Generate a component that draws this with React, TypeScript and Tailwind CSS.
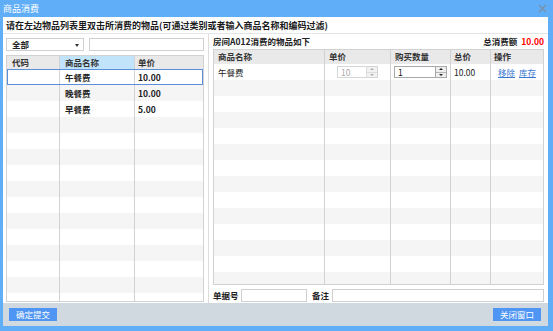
const font = { fontFamily: '"Noto Sans CJK SC", "Noto Sans", sans-serif' };

const leftRows = [
  { code: "", name: "午餐费", price: "10.00" },
  { code: "", name: "晚餐费", price: "10.00" },
  { code: "", name: "早餐费", price: "5.00" },
];

const Spinner = ({ value, disabled }: { value: string; disabled?: boolean }) => {
  return (
    <div
      className={`flex h-[12px] border ${disabled ? "border-[#d6d6d6] bg-white" : "border-[#a9a9a9] bg-white"}`}
    >
      <div className={`flex-1 pl-[3px] leading-[10px] text-[8.5px] ${disabled ? "text-[#aaa]" : "text-[#111]"}`}>
        {value}
      </div>
      <div
        className={`flex w-[11px] flex-col border-l ${disabled ? "border-[#dcdcdc] bg-[#f2f2f2]" : "border-[#a9a9a9] bg-[#eeeeee]"}`}
      >
        <div className={`flex flex-1 items-center justify-center border-b ${disabled ? "border-[#dcdcdc]" : "border-[#b5b5b5]"}`}>
          <div
            className={`h-0 w-0 border-x-[2px] border-b-[2px] border-x-transparent ${disabled ? "border-b-[#b0b0b0]" : "border-b-[#222]"}`}
          />
        </div>
        <div className="flex flex-1 items-center justify-center">
          <div
            className={`h-0 w-0 border-x-[2px] border-t-[2px] border-x-transparent ${disabled ? "border-t-[#b0b0b0]" : "border-t-[#222]"}`}
          />
        </div>
      </div>
    </div>
  );
};

export default function App() {
  return (
    <div className="flex h-[331px] w-[553px] flex-col overflow-hidden bg-[#60aef7]" style={font}>
      {/* title bar */}
      <div className="flex h-[17px] shrink-0 items-center justify-between pl-[3px] pr-[5px]">
        <span className="text-[9px] leading-none text-white">商品消费</span>
        <svg width="9" height="9" viewBox="0 0 9 9" className="mr-[1px]">
          <path d="M1 1 L8 8 M8 1 L1 8" stroke="#7b8fa6" strokeWidth="1.3" />
        </svg>
      </div>

      <div className="ml-[3px] mr-[5px] flex min-h-0 flex-1 flex-col">
        <div className="flex h-[286px] shrink-0 flex-col overflow-hidden bg-white">
          <div className="flex h-[17px] shrink-0 items-center border-b border-[#e3e6e9] pl-[3px]">
            <span className="text-[9px] font-bold leading-none text-[#1a1a1a]">
              请在左边物品列表里双击所消费的物品(可通过类别或者输入商品名称和编码过滤)
            </span>
          </div>

          <div className="flex min-h-0 flex-1 pl-[3px]">
            {/* left panel */}
            <div className="flex min-h-0 w-[198px] flex-col pb-[1px] pt-[4px]">
              <div className="flex h-[13px] shrink-0 gap-[5px]">
                <div className="relative flex w-[78px] items-center border border-[#d0d0d0] pl-[5px]">
                  <span className="text-[8.5px] font-bold leading-none text-[#222]">全部</span>
                  <div className="absolute right-[4px] top-[5px] h-0 w-0 border-x-[2.5px] border-t-[3px] border-x-transparent border-t-[#333]" />
                </div>
                <div className="flex-1 border border-[#d0d0d0]" />
              </div>
              <div className="mt-[4px] flex min-h-0 flex-1 flex-col overflow-hidden border border-[#d2d2d2]">
                <div className="grid h-[13px] shrink-0 grid-cols-[53px_75px_1fr] bg-[#e9e9e9] text-[8.5px] font-bold leading-[12px] text-[#333]">
                  <div className="border-r border-[#d2d2d2] pl-[5px]">代码</div>
                  <div className="border-r border-[#d2d2d2] bg-[#c2e4fb] pl-[5px]">商品名称</div>
                  <div className="pl-[3px]">单价</div>
                </div>
                {Array.from({ length: 16 }).map((_, i) => {
                  const r = leftRows[i];
                  const selected = i === 0;
                  return (
                    <div
                      key={i}
                      className={`relative grid h-[16px] shrink-0 grid-cols-[53px_75px_1fr] text-[8.5px] font-bold leading-[16px] text-[#222] ${i % 2 === 1 ? "bg-[#f5f5f5]" : "bg-white"}`}
                    >
                      <div className="border-r border-[#d2d2d2] pl-[5px]">{r?.code}</div>
                      <div className="border-r border-[#d2d2d2] pl-[5px]">{r?.name}</div>
                      <div className="pl-[3px]">{r?.price}</div>
                      {selected && <div className="absolute inset-0 border border-[#5b8fdc]" />}
                    </div>
                  );
                })}
              </div>
            </div>

            <div className="ml-[4px] w-px bg-[#dddddd]" />

            {/* right panel */}
            <div className="ml-[4px] flex min-h-0 w-[331px] flex-col pb-[1px]">
              <div className="flex h-[15px] shrink-0 items-center justify-between">
                <span className="text-[8.5px] font-bold leading-none text-[#222]">房间A012消费的物品如下</span>
                <span className="text-[8.5px] font-bold leading-none text-[#222]">
                  总消费额 <span className="ml-[2px] text-[#f00]">10.00</span>
                </span>
              </div>
              <div className="flex h-[236px] shrink-0 flex-col overflow-hidden border border-[#d2d2d2]">
                <div className="grid h-[14px] shrink-0 grid-cols-[111px_66px_60px_40px_1fr] bg-[#e9e9e9] text-[8.5px] font-bold leading-[13px] text-[#333]">
                  <div className="border-r border-[#d2d2d2] pl-[4px]">商品名称</div>
                  <div className="border-r border-[#d2d2d2] pl-[4px]">单价</div>
                  <div className="border-r border-[#d2d2d2] pl-[4px]">购买数量</div>
                  <div className="border-r border-[#d2d2d2] pl-[3px]">总价</div>
                  <div className="pl-[3px]">操作</div>
                </div>
                {Array.from({ length: 15 }).map((_, i) => (
                  <div
                    key={i}
                    className={`grid h-[16px] shrink-0 grid-cols-[111px_66px_60px_40px_1fr] text-[8.5px] leading-[16px] text-[#222] ${i % 2 === 1 ? "bg-[#f5f5f5]" : "bg-white"}`}
                  >
                    <div className="border-r border-[#d2d2d2] pl-[4px]">{i === 0 ? "午餐费" : ""}</div>
                    <div className="flex items-center justify-center border-r border-[#d2d2d2]">
                      {i === 0 && (
                        <div className="w-[41px]">
                          <Spinner value="10" disabled />
                        </div>
                      )}
                    </div>
                    <div className="flex items-center border-r border-[#d2d2d2] pl-[3px]">
                      {i === 0 && (
                        <div className="w-[53px]">
                          <Spinner value="1" />
                        </div>
                      )}
                    </div>
                    <div className="border-r border-[#d2d2d2] pl-[3px]">{i === 0 ? "10.00" : ""}</div>
                    <div className="flex justify-center gap-[4px]">
                      {i === 0 && (
                        <>
                          <span className="text-[#3b78d0] underline">移除</span>
                          <span className="text-[#3b78d0] underline">库存</span>
                        </>
                      )}
                    </div>
                  </div>
                ))}
              </div>
              <div className="mt-[4px] flex h-[13px] shrink-0 items-center">
                <span className="w-[28px] text-[8.5px] font-bold leading-none text-[#222]">单据号</span>
                <div className="h-[13px] w-[66px] border border-[#cfcfcf]" />
                <span className="ml-[5px] w-[20px] text-[8.5px] font-bold leading-none text-[#222]">备注</span>
                <div className="h-[13px] flex-1 border border-[#cfcfcf]" />
              </div>
            </div>
          </div>
        </div>

        {/* footer */}
        <div className="flex h-[23px] shrink-0 items-center justify-between bg-[#d0d9df] pl-[6px] pr-[7px]">
          <button className="h-[13px] w-[48px] bg-[#4f95f3] text-[8.5px] leading-none text-white">确定提交</button>
          <button className="h-[13px] w-[48px] bg-[#4f95f3] text-[8.5px] leading-none text-white">关闭窗口</button>
        </div>
      </div>
    </div>
  );
}
